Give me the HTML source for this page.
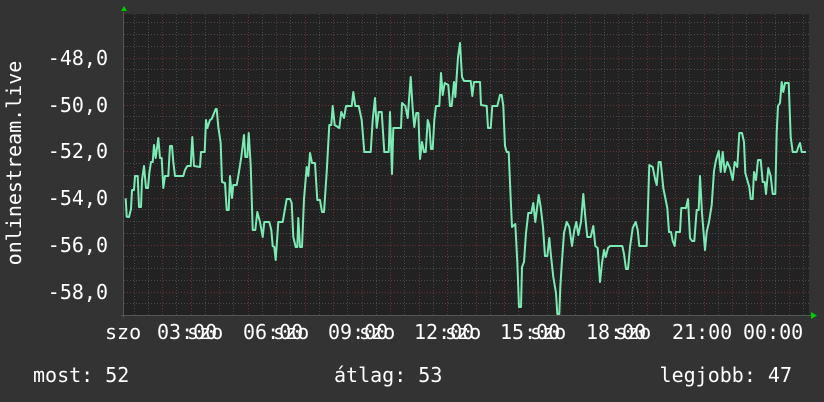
<!DOCTYPE html>
<html><head><meta charset="utf-8"><style>
html,body{margin:0;padding:0;background:#333;width:824px;height:402px;overflow:hidden}
svg{display:block}
text{font-family:"DejaVu Sans Mono","Liberation Mono",monospace;fill:#fff}
</style></head><body>
<svg width="824" height="402" viewBox="0 0 824 402" xmlns="http://www.w3.org/2000/svg">
<rect width="824" height="402" fill="#333"/>
<rect x="124" y="14" width="685" height="301" fill="#222"/>
<g stroke="#4a4a4a" stroke-width="1" stroke-dasharray="1,2" shape-rendering="crispEdges">
<path d="M124 22.5H809M124 34.5H809M124 46.5H809M124 69.5H809M124 81.5H809M124 93.5H809M124 116.5H809M124 128.5H809M124 139.5H809M124 163.5H809M124 175.5H809M124 186.5H809M124 209.5H809M124 221.5H809M124 233.5H809M124 256.5H809M124 268.5H809M124 280.5H809M124 303.5H809"/>
<path d="M134.5 14V315M148.5 14V315M176.5 14V315M205.5 14V315M233.5 14V315M262.5 14V315M290.5 14V315M319.5 14V315M347.5 14V315M376.5 14V315M404.5 14V315M433.5 14V315M461.5 14V315M490.5 14V315M518.5 14V315M547.5 14V315M575.5 14V315M604.5 14V315M632.5 14V315M661.5 14V315M689.5 14V315M718.5 14V315M746.5 14V315M775.5 14V315M803.5 14V315"/>
</g>
<g stroke="#6a3232" stroke-width="1" stroke-dasharray="1,2" shape-rendering="crispEdges">
<path d="M124 58.5H809M124 105.5H809M124 151.5H809M124 198.5H809M124 245.5H809M124 292.5H809"/>
<path d="M162.5 14V315M191.5 14V315M219.5 14V315M248.5 14V315M276.5 14V315M305.5 14V315M333.5 14V315M362.5 14V315M390.5 14V315M419.5 14V315M447.5 14V315M476.5 14V315M504.5 14V315M533.5 14V315M561.5 14V315M590.5 14V315M618.5 14V315M647.5 14V315M675.5 14V315M704.5 14V315M732.5 14V315M761.5 14V315M789.5 14V315"/>
</g>
<path d="M123.5 12V318M121 315.5H812" stroke="#555" stroke-width="1" fill="none"/>
<path d="M121 11L124 6L127 11Z" fill="#0c0"/>
<path d="M811 312L817 315.5L811 319Z" fill="#0c0"/>
<polyline fill="none" stroke="#7ceab4" stroke-width="2" stroke-linejoin="round" points="125.7,198.3 126.7,216.7 129,217 131,209 132,190 134,190 135,176 137.7,176 139,207 141,207 142,180 144,166 146,188 148,188 149.3,173 151,162 152.7,162 154,145 155.7,158 158.3,138 160,158 161.7,158 163.3,188 165,176 168.3,176 170,146 172,146 173.3,162 175,176 183.3,176 185,170 187.3,166 190.7,166 192.3,137 194,166 200,167 201,152 204.7,152 206,120 207.3,128 210,120 211.7,119 215.7,109 216.7,109 218.3,127 220.7,143 222,182 225,183 226.7,210 228.7,210 230,176 232,198 233.3,185 236.7,185 238.3,176 241.3,157 244,135 245.3,157 247.3,157 248.7,133 250.7,165 252.7,230 255.3,230 257.3,212 260,222 262.7,237 264.3,222 269.3,222 271.3,230 272.7,246 274.3,247 275.7,260 278.3,222 282.7,222 286.7,199 290,199 291.7,203 293.3,237 295.7,247 297.3,247 298.3,218 300,247 302,247 304,199 306.7,167 308.3,176 310,153 312,163 315,163 317.3,200 320,200 322,212 324,212 326.7,172 329.3,125 331.3,125 332.7,106 334.7,125 339.3,128 341.3,112 344,118 346,106 351.7,106 353.3,92 355.3,106 358.7,106 361.7,120 364.3,152 370.7,152 372.7,120 375,98 376.7,128 378.7,112 381.7,112 384.3,152 388.7,152 390,112 392,174 393.3,128 401,128 402,103 405.3,106 407.7,118 410.7,77 412.7,109 414.3,127 416.3,113 418.3,113 420,159 422,142 424,152 425.7,152 427.7,120 429.3,125 431,149 432.7,149 434.3,120 436,106 439.3,106 441,73 442.7,95 444.7,83 448.3,85 450,106 451.7,106 454,82 455.3,97 458,57 460,43 462,77 464,81 470.7,81 472.3,96 474,82 480,82 481,105 486.7,106 488,128 490.7,128 492.3,106 497.3,106 500,95 501.7,95 503.3,106 505,146 506.7,152 508.7,152 510.7,199 512,227 515.3,224 517.3,262 519,307 521,307 522,267 524,262 526,233 528.3,213 531.3,213 533.3,203 535.3,222 538.7,195 540.7,207 543,227 545,256 547.3,256 549.3,238 551,256 553.3,277 556,293 557.3,314 559.3,314 560.3,287 561.7,265 564,233 566.7,222 569.3,227 572,246 574.3,230 576.3,222 578.3,235 581,222 583.3,194 585.3,217 587.3,237 590.7,237 593.3,226 595.3,246 597.7,248 600,282 602,263 604,250 605.7,257 608,248 610,246 622.3,246 624,254 626,269 628,269 630,247 632.7,228 635.7,222 637.7,230 639.3,246 646.7,246 649.3,165 652.7,167 655.3,180 656.7,185 658.7,162 660.7,162 663.3,188 667.3,208 669,232 671,232 672.7,241 674.7,246 676,232 680,232 681.3,208 686,208 688,199 690,238 692,241 694.3,241 696.7,210 698.7,210 700,176 702,213 705,250 706.7,232 709,222 711.7,205 714,171 716,160 718.7,151 720.7,172 722.7,152 724.7,172 727.3,162 730,168 732.7,180 734.7,162 737.3,167 739.3,133 742,133 744,142 745.3,173 747.3,180 749.3,187 750.7,199 752.7,199 754,172 756,180 758,160 760.7,160 762.7,182 764.7,182 766,194 768.3,168 770.7,176 772.7,194 775.3,194 776.7,132 778,106 780,103 781.7,82 783.3,92 785,83 788.7,83 790.7,137 792.7,152 796.7,152 798.3,147 800,143 801.7,152 806,152"/>
<g font-size="20" text-anchor="end">
<text x="108" y="65">-48,0</text>
<text x="108" y="112">-50,0</text>
<text x="108" y="158">-52,0</text>
<text x="108" y="205">-54,0</text>
<text x="108" y="252">-56,0</text>
<text x="108" y="299">-58,0</text>
</g>
<text font-size="20" transform="translate(21,163) rotate(-90)" text-anchor="middle">onlinestream.live</text>
<g font-size="20">
<text x="105" y="339">szo</text><text x="157" y="339">03:00</text>
<text x="187" y="339">szo</text><text x="243" y="339">06:00</text>
<text x="273" y="339">szo</text><text x="328" y="339">09:00</text>
<text x="359" y="339">szo</text><text x="414" y="339">12:00</text>
<text x="445" y="339">szo</text><text x="500" y="339">15:00</text>
<text x="530" y="339">szo</text><text x="586" y="339">18:00</text>
<text x="615" y="339">szo</text><text x="672" y="339">21:00</text>
<text x="743" y="339">00:00</text>
</g>
<g font-size="20">
<text x="33" y="382">most: 52</text>
<text x="334" y="382">átlag: 53</text>
<text x="792" y="382" text-anchor="end">legjobb: 47</text>
</g>
</svg>
</body></html>
